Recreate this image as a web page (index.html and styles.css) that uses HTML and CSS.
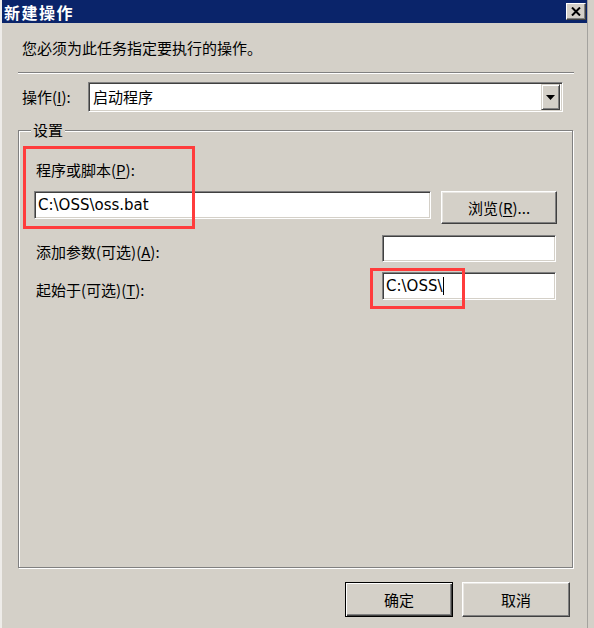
FILE: index.html
```html
<!DOCTYPE html>
<html lang="zh-CN">
<head>
<meta charset="utf-8">
<title>新建操作</title>
<link rel="stylesheet" href="styles.css">
</head>
<body>
<div class="window">
  <div class="titlebar">
    <span class="title">新建操作</span>
    <button class="close" aria-label="关闭">
      <svg width="10" height="9" viewBox="0 0 10 9"><path d="M1 0.5 L9 8.5 M9 0.5 L1 8.5" stroke="#000" stroke-width="2" fill="none"/></svg>
    </button>
  </div>
  <div class="body">
    <p class="intro">您必须为此任务指定要执行的操作。</p>
    <div class="sep"></div>
    <div class="action-row">
      <span class="action-label">操作(<u>I</u>):</span>
      <div class="combo">
        <span class="combo-text">启动程序</span>
        <span class="drop"><svg width="9" height="5" viewBox="0 0 9 5"><path d="M0 0 H9 L4.5 5 Z" fill="#000"/></svg></span>
      </div>
    </div>
    <div class="group">
      <span class="legend">设置</span>
      <div class="lbl">程序或脚本(<u>P</u>):</div>
      <div class="prog-row">
        <div class="input wide">C:\OSS\oss.bat</div>
        <button class="btn browse">浏览(<u>R</u>)...</button>
      </div>
      <div class="opt-row first">
        <span class="opt-label">添加参数(可选)(<u>A</u>):</span>
        <div class="input short"></div>
      </div>
      <div class="opt-row second">
        <span class="opt-label">起始于(可选)(<u>T</u>):</span>
        <div class="input short tall">C:\OSS\<span class="caret"></span></div>
      </div>
      <div class="mark mark1"></div>
      <div class="mark mark2"></div>
    </div>
    <div class="footer">
      <button class="btn default">确定</button>
      <button class="btn">取消</button>
    </div>
  </div>
</div>
</body>
</html>
```

FILE: styles.css
```css
* { box-sizing: border-box; }
html, body { margin: 0; padding: 0; }
body {
  width: 594px;
  height: 628px;
  background: #d4d0c8;
  font-family: "Noto Sans CJK SC", "DejaVu Sans", sans-serif;
  font-size: 15px;
  color: #000;
  overflow: hidden;
}
u { text-decoration: underline; text-underline-offset: 2px; }

.window {
  width: 588px;
  height: 628px;
  border-left: 2px solid #eeece9;
  border-right: 1px solid #a4a29e;
  background: #d4d0c8;
}

.titlebar {
  height: 23px;
  background: #0a246a;
  display: flex;
  align-items: center;
  justify-content: space-between;
  padding: 0 1px 0 2px;
}
.title {
  color: #fff;
  font-weight: bold;
  font-size: 16px;
  letter-spacing: 1.5px;
  line-height: 20px;
}
.close {
  width: 20px;
  height: 17px;
  padding: 0;
  margin: 0;
  background: #d4d0c8;
  border: 1px solid;
  border-color: #fff #404040 #404040 #fff;
  box-shadow: inset -1px -1px #808080;
  display: flex;
  align-items: center;
  justify-content: center;
}

.body { padding: 0 13px 0 16px; }

.intro {
  margin: 15px 0 0 4px;
  line-height: 20px;
  font-size: 15px;
}
.sep {
  margin-top: 14px;
  height: 2px;
  border-top: 1px solid #808080;
  border-bottom: 1px solid #fff;
}

.action-row {
  margin-top: 8px;
  display: flex;
  align-items: center;
}
.action-label {
  width: 70px;
  padding-left: 4px;
  line-height: 20px;
}
.combo {
  width: 475px;
  height: 30px;
  background: #fff;
  border: 1px solid;
  border-color: #808080 #fff #fff #808080;
  box-shadow: inset 1px 1px #404040, inset -1px -1px #d4d0c8;
  display: flex;
  align-items: center;
  justify-content: space-between;
  padding: 2px;
}
.combo-text { padding-left: 2px; line-height: 20px; }
.drop {
  width: 19px;
  height: 26px;
  background: #d4d0c8;
  border: 1px solid;
  border-color: #d4d0c8 #404040 #404040 #d4d0c8;
  box-shadow: inset 1px 1px #fff, inset -1px -1px #808080;
  display: flex;
  align-items: center;
  justify-content: center;
}

.group {
  position: relative;
  margin-top: 18px;
  width: 555px;
  height: 438px;
  border: 1px solid #808080;
  box-shadow: inset 1px 1px #fff, 1px 1px #fff;
  padding: 29px 0 0 15px;
}
.legend {
  position: absolute;
  top: -11px;
  left: 12px;
  padding: 0 2px;
  background: #d4d0c8;
  line-height: 20px;
}
.lbl { margin-left: 2px; line-height: 20px; }

.input {
  height: 28px;
  background: #fff;
  border: 1px solid;
  border-color: #808080 #fff #fff #808080;
  box-shadow: inset 1px 1px #404040, inset -1px -1px #d4d0c8;
  font-family: "DejaVu Sans", "Noto Sans CJK SC", sans-serif;
  font-size: 15px;
  line-height: 24px;
  padding: 1px 3px;
  display: flex;
  align-items: center;
}
.wide { width: 397px; }
.short { width: 174px; height: 27px; }
.short.tall { height: 28px; }
.caret {
  display: inline-block;
  width: 1px;
  height: 18px;
  background: #000;
  margin-left: 1px;
}

.prog-row {
  margin-top: 11px;
  display: flex;
  align-items: flex-start;
  gap: 10px;
}

.btn {
  font-family: "Noto Sans CJK SC", "DejaVu Sans", sans-serif;
  font-size: 15px;
  color: #000;
  background: #d4d0c8;
  border: 1px solid;
  border-color: #fff #404040 #404040 #fff;
  box-shadow: inset -1px -1px #808080, inset 1px 1px #e8e6e2;
  padding: 0;
  margin: 0;
  width: 108px;
  height: 35px;
  line-height: 20px;
}
.browse { width: 116px; height: 33px; }

.opt-row {
  width: 522px;
  display: flex;
  align-items: center;
  justify-content: space-between;
}
.opt-row.first { margin-top: 10px; }
.opt-row.second { margin-top: 10px; }
.opt-label { margin-left: 2px; line-height: 20px; padding-top: 8px; }

.mark {
  position: absolute;
  border: 3px solid #ff3c3c;
}
.mark1 { left: 4px; top: 15px; width: 172px; height: 83px; }
.mark2 { left: 351px; top: 137px; width: 95px; height: 41px; }

.footer {
  margin-top: 14px;
  display: flex;
  justify-content: flex-end;
  gap: 9px;
  padding-right: 4px;
}
.btn.default {
  border: 1px solid #000;
  box-shadow: inset 1px 1px #fff, inset -1px -1px #404040, inset -2px -2px #808080;
}
```
